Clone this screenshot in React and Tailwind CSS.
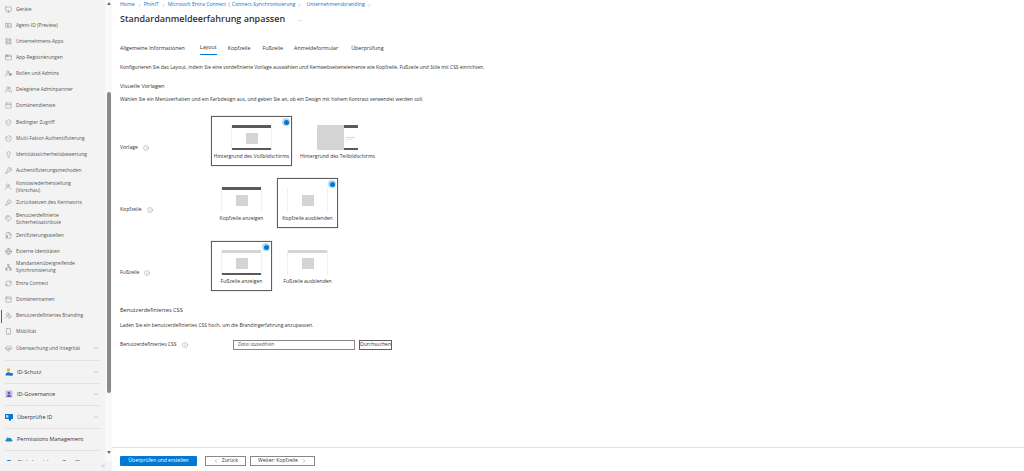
import React from "react";
import { Monitor, IdCard, LayoutGrid, AppWindow, UserCog, Users, PanelTop, ShieldCheck, BadgeCheck, Lightbulb, KeyRound, UserRoundCheck, KeySquare, Tags, FileBadge, Globe, Network, RefreshCw, Smartphone, HeartPulse, ChevronDown, ChevronLeft, ChevronRight, ChevronsLeft, Info, UserRoundPen } from "lucide-react";

const items = [
  [Monitor, "Geräte"],
  [IdCard, "Agent-ID (Preview)"],
  [LayoutGrid, "Unternehmens-Apps"],
  [AppWindow, "App-Registrierungen"],
  [UserCog, "Rollen und Admins"],
  [Users, "Delegierte Adminpartner"],
  [PanelTop, "Domänendienste"],
  [ShieldCheck, "Bedingter Zugriff"],
  [BadgeCheck, "Multi-Faktor-Authentifizierung"],
  [Lightbulb, "Identitätssicherheitsbewertung"],
  [KeyRound, "Authentifizierungsmethoden"],
  [UserRoundCheck, "Kontowiederherstellung (Vorschau)"],
  [KeySquare, "Zurücksetzen des Kennworts"],
  [Tags, "Benutzerdefinierte Sicherheitsattribute"],
  [FileBadge, "Zertifizierungsstellen"],
  [Globe, "Externe Identitäten"],
  [Network, "Mandantenübergreifende Synchronisierung"],
  [RefreshCw, "Entra Connect"],
  [PanelTop, "Domänennamen"],
  [UserRoundPen, "Benutzerdefiniertes Branding", true],
  [Smartphone, "Mobilität"],
  [HeartPulse, "Überwachung und Integrität", false, true],
];

function IconSchutz() {
  return (
    <svg viewBox="0 0 8 8" className="mr-[4px] h-[8px] w-[8px] shrink-0">
      <circle cx="3.5" cy="2" r="1.7" fill="#f2b233" />
      <path d="M0.5 7.5C0.5 5 2 4.2 3.5 4.2S6.5 5 6.5 7.5Z" fill="#0078d4" />
      <rect x="5" y="5" width="2.8" height="2.6" fill="#2f6fb5" />
    </svg>
  );
}
function IconGovernance() {
  return (
    <svg viewBox="0 0 8 8" className="mr-[4px] h-[8px] w-[8px] shrink-0">
      <rect x="0.5" y="0.5" width="7" height="7" rx="0.5" fill="#c7bde6" />
      <circle cx="4" cy="3" r="1.3" fill="#6b55b5" />
      <path d="M1.8 7C1.8 5.3 3 4.8 4 4.8S6.2 5.3 6.2 7Z" fill="#6b55b5" />
    </svg>
  );
}
function IconVerified() {
  return (
    <svg viewBox="0 0 8 8" className="mr-[4px] h-[8px] w-[8px] shrink-0">
      <rect x="0" y="1" width="8" height="5" rx="0.5" fill="#0078d4" />
      <rect x="1" y="2.2" width="2.4" height="2.4" fill="#bfe0f7" />
      <rect x="4" y="6" width="2" height="1.5" fill="#1c4f86" />
    </svg>
  );
}
function IconPermissions() {
  return (
    <svg viewBox="0 0 8 8" className="mr-[4px] h-[8px] w-[8px] shrink-0">
      <path d="M1.5 6.5C0.2 6.5 0 4.8 1.2 4.4 1.4 3 3 2.3 4.1 3.2 5.4 2.4 6.8 3.4 6.6 4.5 7.9 4.8 7.8 6.5 6.6 6.5Z" fill="#1f86c9" />
      <circle cx="2.6" cy="3.4" r="1" fill="#2aa58a" />
    </svg>
  );
}
function IconGlobal() {
  return (
    <svg viewBox="0 0 8 8" className="mr-[4px] h-[8px] w-[8px] shrink-0">
      <path d="M1 6C0 4.5 1 2 4 2s4 2.5 3 4Z" fill="#0078d4" />
    </svg>
  );
}

const sections = [
  [IconSchutz, "ID-Schutz", true],
  [IconGovernance, "ID-Governance", true],
  [IconVerified, "Überprüfte ID", true],
  [IconPermissions, "Permissions Management", false],
  [IconGlobal, "Globaler sicherer Zugriff", false],
];

function Preview({ kind }) {
  const top = kind.includes("t") ? "bg-[#5a5a5a]" : kind.includes("l") ? "bg-[#d4d4d4]" : "bg-transparent";
  const bottom = kind.includes("b") ? "bg-[#5a5a5a]" : "bg-transparent";
  return (
    <div className="flex h-[25px] w-[41px] flex-col justify-between rounded-[1px] border-x border-[#f0f0f0] bg-white">
      <div className={`h-[3px] ${top}`} />
      <div className="mx-auto h-[11px] w-[12px] bg-[#d4d4d4]" />
      <div className={`h-[2px] ${bottom}`} />
    </div>
  );
}

function SplitPreview() {
  return (
    <div className="flex h-[25px] w-[41px]">
      <div className="h-full w-[27px] rounded-l-[1px] bg-[#d4d4d4]" />
      <div className="flex flex-1 flex-col justify-between">
        <div className="h-[3px] bg-[#5a5a5a]" />
        <div className="ml-[2px] flex flex-col gap-[1px]">
          <div className="h-px w-[9px] bg-[#d8d8d8]" />
          <div className="h-px w-[6px] bg-[#e4e4e4]" />
        </div>
        <div className="h-[2px] bg-[#5a5a5a]" />
      </div>
    </div>
  );
}

function Card({ label, selected, width, children }) {
  return (
    <div className={`relative box-border flex h-[50px] flex-col items-center border pt-[8px] ${width} ${selected ? "border-[#605e5c] shadow-[0_0_1px_#a0a0a0]" : "border-transparent"}`}>
      {children}
      <span className="mt-[2px] whitespace-nowrap text-[5.05px] leading-[8px] text-[#323130]">{label}</span>
      {selected && (
        <span className="absolute right-[1px] top-[1px] flex h-[8px] w-[8px] items-center justify-center rounded-full bg-[#b5d9f3]">
          <span className="h-[5px] w-[5px] rounded-full bg-[#0078d4]" />
        </span>
      )}
    </div>
  );
}

function RowLabel({ text, width = "w-[91px]", top = "pt-[14px]" }) {
  return (
    <div className={`flex shrink-0 items-center gap-[5px] text-[5.05px] text-[#323130] ${width} ${top}`}>
      <span>{text}</span>
      <Info size={6} strokeWidth={1.2} className="text-[#605e5c]" />
    </div>
  );
}

export default function App() {
  return (
    <div className="flex h-[471px] w-[1024px] overflow-hidden bg-white text-[#323130]" style={{ fontFamily: '"Open Sans", "Noto Sans", sans-serif' }}>
      <aside className="flex h-full w-[112px] shrink-0 flex-col bg-[#f3f3f3]">
        <div className="flex min-h-0 flex-1">
          <div className="flex w-[105px] shrink-0 flex-col overflow-hidden">
            <div className="flex flex-col pt-[1px]">
              {items.map(([Icon, label, active, chevron]) => (
                <div key={label} className="relative flex h-[16.15px] shrink-0 items-center px-[5px]">
                  {active && <span className="absolute left-[1px] top-[2px] h-[13px] w-[1px] bg-[#0078d4]" />}
                  <Icon size={7} strokeWidth={1.3} className="mr-[4px] shrink-0 text-[#666f78]" />
                  <span className={`text-[4.9px] leading-[7px] text-[#555555] ${chevron ? "flex-1" : "max-w-[75px]"}`}>{label}</span>
                  {chevron && <ChevronDown size={8} strokeWidth={1} className="text-[#777777]" />}
                </div>
              ))}
            </div>
            <div className="flex flex-col pt-[4px]">
              {sections.map(([Icon, label, chevron]) => (
                <div key={label} className="mx-[5px] flex h-[22.5px] shrink-0 items-center border-t border-[#e2e2e2]">
                  <Icon />
                  <span className="flex-1 whitespace-nowrap text-[5.5px] text-[#333333]">{label}</span>
                  {chevron && <ChevronDown size={8} strokeWidth={1} className="text-[#777777]" />}
                </div>
              ))}
            </div>
          </div>
          <div className="flex h-full w-[7px] shrink-0 flex-col items-center bg-[#f9f9f9] pt-[2px]">
            <span className="h-0 w-0 border-x-[2px] border-b-[3px] border-x-transparent border-b-[#707070]" />
            <span className="mt-[87px] h-[301px] w-[4px] rounded-full bg-[#8a8a8a]" />
            <span className="mt-[58px] h-0 w-0 border-x-[2px] border-t-[3px] border-x-transparent border-t-[#707070]" />
          </div>
        </div>
        <div className="flex h-[10px] shrink-0 items-center justify-end pr-[6px]">
          <ChevronsLeft size={6} strokeWidth={1} className="text-[#0078d4]" />
        </div>
      </aside>

      <main className="flex h-full min-w-0 flex-1 flex-col">
        <div className="flex-1 pl-[8px]">
          <nav className="flex h-[10px] items-center gap-[2px] text-[5.2px] text-[#0078d4]">
            <span>Home</span><ChevronRight size={5} className="text-[#888888]" />
            <span>PhiniT</span><ChevronRight size={5} className="text-[#888888]" />
            <span>Microsoft Entra Connect | Connect-Synchronisierung</span><ChevronRight size={5} className="text-[#888888]" />
            <span className="ml-[2px]">Unternehmensbranding</span><ChevronRight size={5} className="text-[#888888]" />
          </nav>
          <div className="flex h-[18px] items-center">
            <h1 className="text-[9px] font-semibold text-[#323130]">Standardanmeldeerfahrung anpassen</h1>
            <span className="ml-[13px] text-[6px] text-[#8a8886]">…</span>
          </div>

          <div className="mt-[13px] flex h-[14px] items-center text-[5.35px] text-[#323130]">
            <span className="mr-[15px]">Allgemeine Informationen</span>
            <span className="mr-[11px] flex h-full items-center border-b border-[#0078d4] font-medium">Layout</span>
            <span className="mr-[12px]">Kopfzeile</span>
            <span className="mr-[11px]">Fußzeile</span>
            <span className="mr-[13px]">Anmeldeformular</span>
            <span>Überprüfung</span>
          </div>

          <p className="mt-[8px] h-[8px] text-[4.95px] leading-[8px]">Konfigurieren Sie das Layout, indem Sie eine vordefinierte Vorlage auswählen und Kernwebseitenelemente wie Kopfzeile, Fußzeile und Stile mit CSS einrichten.</p>
          <h2 className="mt-[11px] h-[9px] text-[5.6px] font-medium leading-[9px]">Visuelle Vorlagen</h2>
          <p className="mt-[4px] h-[8px] text-[4.95px] leading-[8px]">Wählen Sie ein Menüverhalten und ein Farbdesign aus, und geben Sie an, ob ein Design mit hohem Kontrast verwendet werden soll.</p>

          <div className="mt-[13px] flex">
            <RowLabel text="Vorlage" />
            <Card label="Hintergrund des Vollbildschirms" selected width="w-[81px]"><Preview kind="tb" /></Card>
            <div className="w-[4px]" />
            <Card label="Hintergrund des Teilbildschirms" width="w-[83px]"><SplitPreview /></Card>
          </div>

          <div className="mt-[12px] flex">
            <RowLabel text="Kopfzeile" />
            <Card label="Kopfzeile anzeigen" width="w-[61px]"><Preview kind="t" /></Card>
            <div className="w-[5px]" />
            <Card label="Kopfzeile ausblenden" selected width="w-[61px]"><Preview kind="" /></Card>
          </div>

          <div className="mt-[13px] flex">
            <RowLabel text="Fußzeile" />
            <Card label="Fußzeile anzeigen" selected width="w-[61px]"><Preview kind="lb" /></Card>
            <div className="w-[5px]" />
            <Card label="Fußzeile ausblenden" width="w-[61px]"><Preview kind="l" /></Card>
          </div>

          <h2 className="mt-[15px] h-[9px] text-[5.6px] font-medium leading-[9px]">Benutzerdefiniertes CSS</h2>
          <p className="mt-[6px] h-[8px] text-[4.95px] leading-[8px]">Laden Sie ein benutzerdefiniertes CSS hoch, um die Brandingerfahrung anzupassen.</p>

          <div className="mt-[11px] flex h-[10px] items-center">
            <RowLabel text="Benutzerdefiniertes CSS" width="w-[113px]" top="" />
            <div className="flex h-[10px] w-[122px] items-center border border-[#8a8886] pl-[4px] text-[4.95px] italic text-[#605e5c]">Datei auswählen</div>
            <div className="ml-[4px] flex h-[10px] w-[33px] items-center justify-center border border-[#605e5c] text-[5px]">Durchsuchen</div>
          </div>
        </div>

        <footer className="flex h-[24px] shrink-0 items-center border-t border-[#e1dfdd] pl-[8px] pt-[2px]">
          <button className="flex h-[10px] w-[77px] items-center justify-center rounded-[1px] bg-[#0078d4] text-[5.1px] font-medium text-white">Überprüfen und erstellen</button>
          <button className="ml-[8px] flex h-[10px] w-[41px] items-center justify-center gap-[3px] border border-[#8a8886] text-[5.1px]"><ChevronLeft size={6} strokeWidth={1.2} />Zurück</button>
          <button className="ml-[4px] flex h-[10px] w-[65px] items-center justify-center gap-[3px] border border-[#8a8886] text-[5.1px]">Weiter: Kopfzeile<ChevronRight size={6} strokeWidth={1.2} /></button>
        </footer>
      </main>
    </div>
  );
}
